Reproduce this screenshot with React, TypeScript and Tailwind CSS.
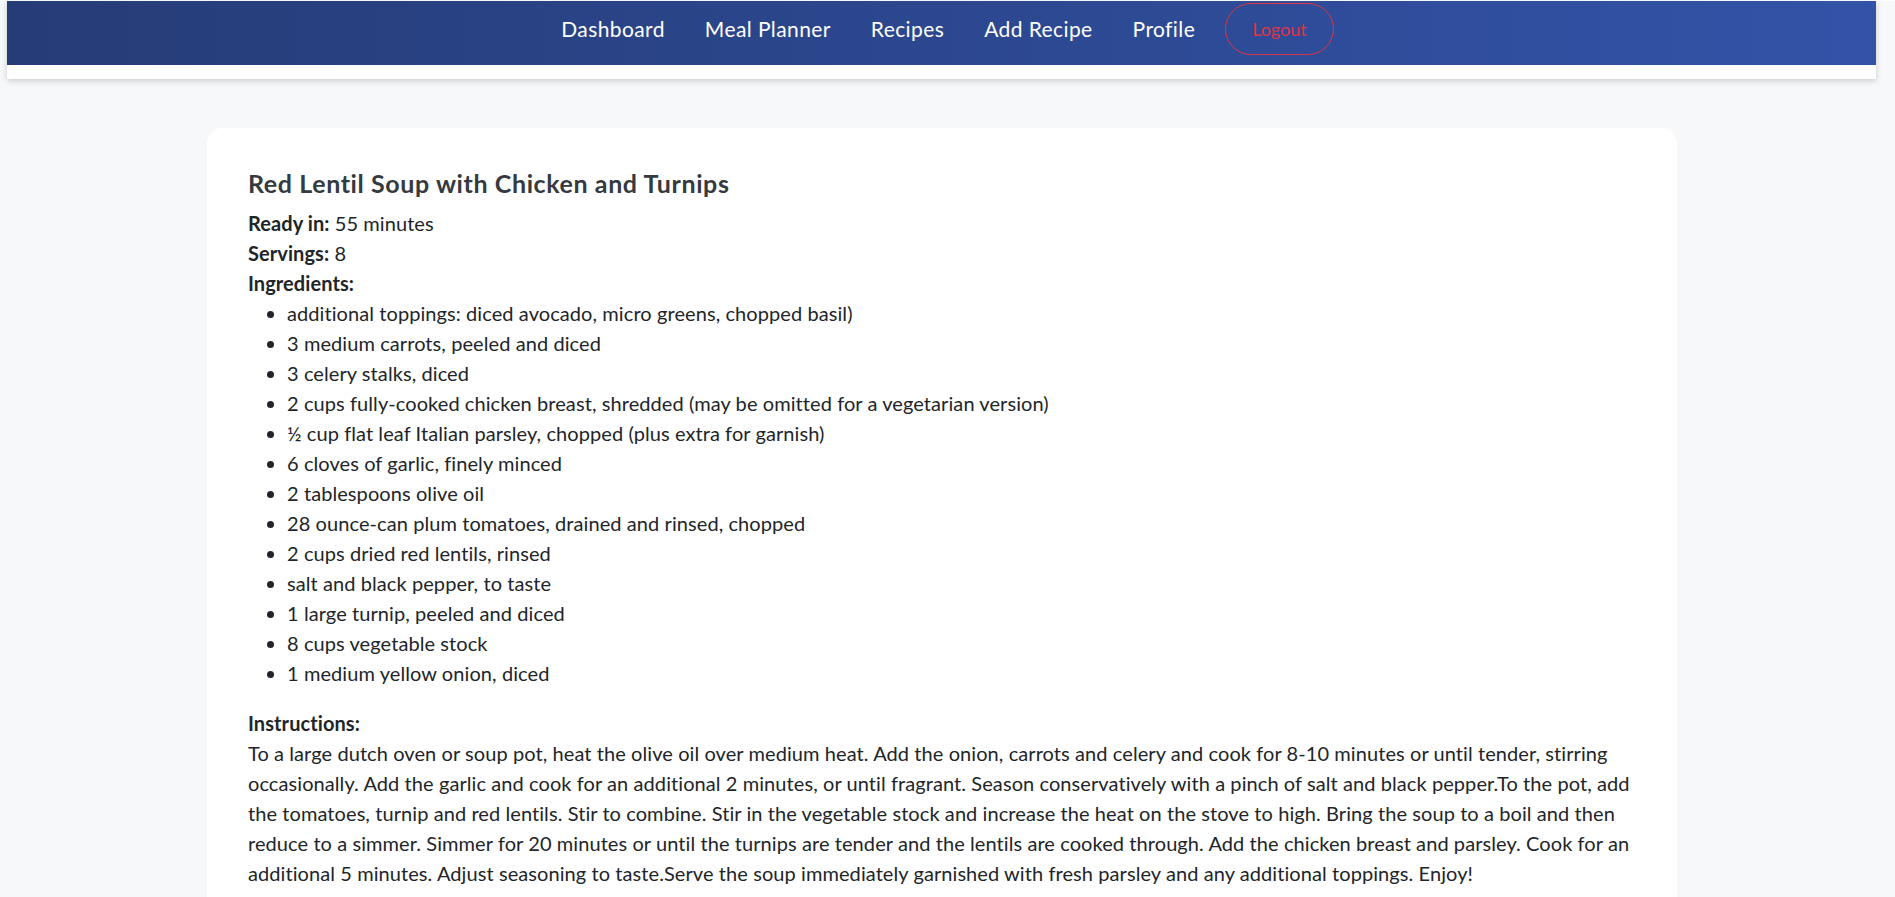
import React from "react";

const ingredients = [
  "additional toppings: diced avocado, micro greens, chopped basil)",
  "3 medium carrots, peeled and diced",
  "3 celery stalks, diced",
  "2 cups fully-cooked chicken breast, shredded (may be omitted for a vegetarian version)",
  "½ cup flat leaf Italian parsley, chopped (plus extra for garnish)",
  "6 cloves of garlic, finely minced",
  "2 tablespoons olive oil",
  "28 ounce-can plum tomatoes, drained and rinsed, chopped",
  "2 cups dried red lentils, rinsed",
  "salt and black pepper, to taste",
  "1 large turnip, peeled and diced",
  "8 cups vegetable stock",
  "1 medium yellow onion, diced",
];

const instructions =
  "To a large dutch oven or soup pot, heat the olive oil over medium heat. Add the onion, carrots and celery and cook for 8-10 minutes or until tender, stirring occasionally. Add the garlic and cook for an additional 2 minutes, or until fragrant. Season conservatively with a pinch of salt and black pepper.To the pot, add the tomatoes, turnip and red lentils. Stir to combine. Stir in the vegetable stock and increase the heat on the stove to high. Bring the soup to a boil and then reduce to a simmer. Simmer for 20 minutes or until the turnips are tender and the lentils are cooked through. Add the chicken breast and parsley. Cook for an additional 5 minutes. Adjust seasoning to taste.Serve the soup immediately garnished with fresh parsley and any additional toppings. Enjoy!";

const links = ["Dashboard", "Meal Planner", "Recipes", "Add Recipe", "Profile"];

function NavBar() {
  return (
    <nav className="ml-[7px] mt-px w-[1869px] bg-white shadow-[0_2px_6px_rgba(0,0,0,0.18)]">
      <div className="flex h-[64px] items-center justify-center gap-[40px] bg-gradient-to-r from-[#263c77] to-[#3253a8] pb-[8px] pl-[12px]">
        {links.map((l) => (
          <a key={l} href="#" className="text-[21px] tracking-[0.4px] text-white">
            {l}
          </a>
        ))}
        <button className="-ml-[10px] h-[52px] rounded-full border border-[#dc3545] px-[26px] text-[18px] text-[#dc3545]">
          Logout
        </button>
      </div>
      <div className="h-[14px]" />
    </nav>
  );
}

export default function App() {
  return (
    <div className="min-h-screen bg-[#f7f8fa] pb-10 font-['Lato','Liberation_Sans',sans-serif] text-[#212529]">
      <NavBar />
      <main className="ml-[207px] mt-[49px] w-[1470px] rounded-[15px] bg-white pb-10 pl-[41px] pr-[30px] pt-[40px]">
        <h2 className="mb-[10px] text-[25px] font-bold leading-[30px] tracking-[0.6px] text-[#343a40]">
          Red Lentil Soup with Chicken and Turnips
        </h2>
        <div className="text-[20px] leading-[30px] tracking-[0.08px]">
          <p>
            <strong>Ready in:</strong> 55 minutes
          </p>
          <p>
            <strong>Servings:</strong> 8
          </p>
          <p>
            <strong>Ingredients:</strong>
          </p>
          <ul className="mb-[20px] list-disc pl-[39px]">
            {ingredients.map((item) => (
              <li key={item}>{item}</li>
            ))}
          </ul>
          <p>
            <strong>Instructions:</strong>
          </p>
          <p>{instructions}</p>
        </div>
      </main>
    </div>
  );
}
